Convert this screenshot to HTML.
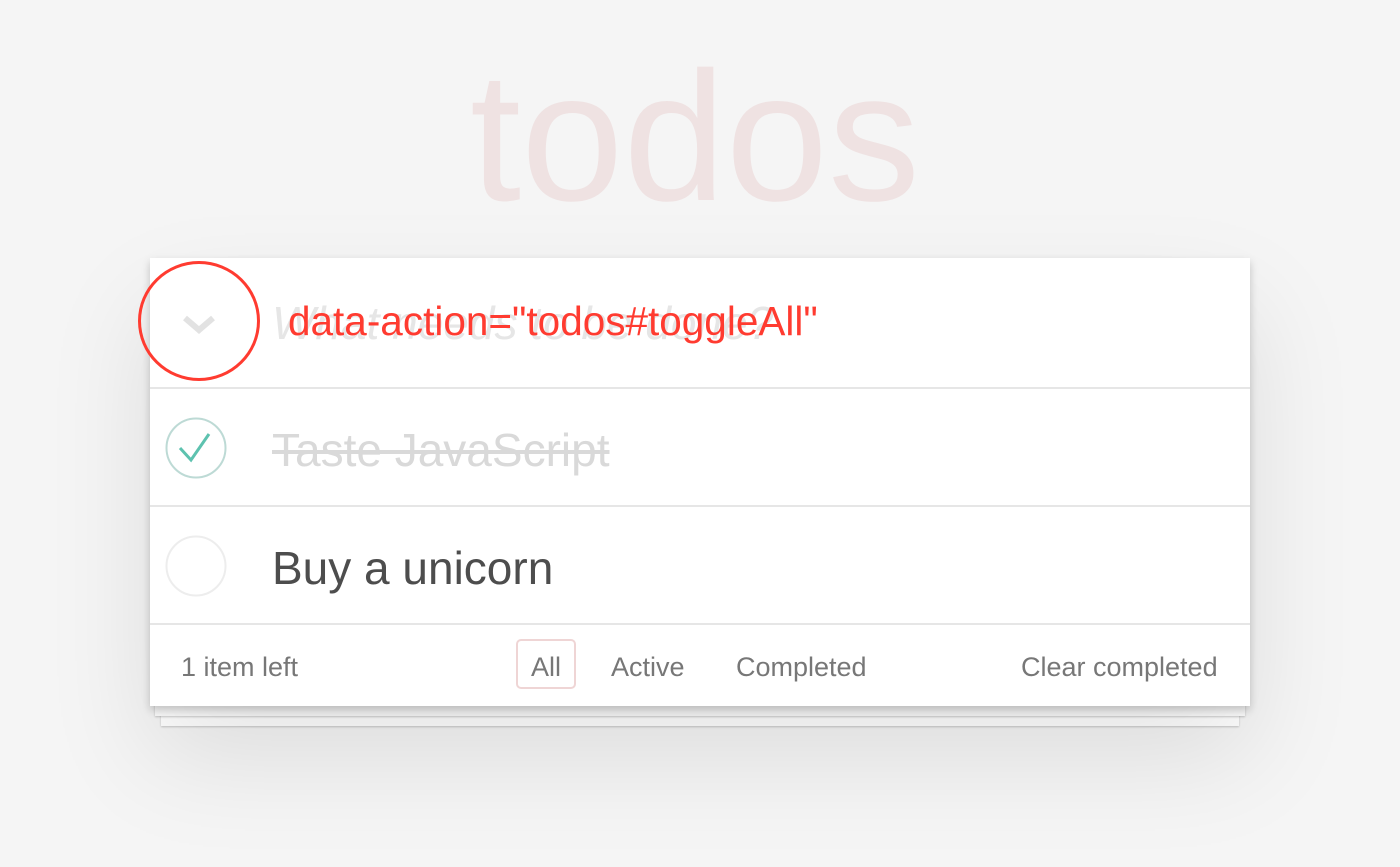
<!DOCTYPE html>
<html><head><meta charset="utf-8"><style>
*{margin:0;padding:0;box-sizing:border-box}
body{width:1400px;height:867px;background:#f5f5f5;font-family:"Liberation Sans",sans-serif;position:relative;overflow:hidden}
h1{position:absolute;left:0;width:1390px;top:44px;text-align:center;font-size:184px;font-weight:normal;color:#efe2e2;letter-spacing:0;line-height:1}
.sheet{position:absolute;background:#fff;box-shadow:0 1px 2px rgba(0,0,0,.2)}
.app{position:absolute;left:150px;top:258px;width:1100px;height:448px;background:#fff;box-shadow:0 4px 8px rgba(0,0,0,.2),0 50px 100px rgba(0,0,0,.1)}
.row{position:absolute;left:0;width:1100px;border-top:2px solid #e6e6e6}
.t{position:absolute;left:122px;font-size:46px;white-space:nowrap}
.f{position:absolute;top:27px;font-size:27px;color:#777;white-space:nowrap}
</style></head><body>
<h1>todos</h1>
<div class="sheet" style="left:161px;top:700px;width:1078px;height:26px"></div>
<div class="sheet" style="left:155px;top:700px;width:1090px;height:16px"></div>
<div class="app">
  <div class="t" style="top:38px;left:122px;color:#e6e6e6;font-style:italic;font-weight:300">What needs to be done?</div>
  <svg style="position:absolute;left:30px;top:50px" width="40" height="30"><path d="M5 10 L19 22 L33 10" stroke="#e2e2e2" stroke-width="6" fill="none"/></svg>
  <div style="position:absolute;left:138px;top:40px;font-size:40.5px;color:#ff3b30;white-space:nowrap">data-action="todos#toggleAll"</div>
  <div style="position:absolute;left:-12px;top:3px;width:122px;height:120px;border:3px solid #ff3b30;border-radius:50%"></div>
  <div class="row" style="top:129px;height:119px">
    <svg style="position:absolute;left:14px;top:28px" width="64" height="64"><circle cx="32" cy="31" r="29.5" fill="none" stroke="#bddad5" stroke-width="2"/><path d="M16 31 L27 43 L45 17" stroke="#5dc2af" stroke-width="3" fill="none"/></svg>
    <div class="t" style="top:34px;color:#d9d9d9;text-decoration:line-through">Taste JavaScript</div>
  </div>
  <div class="row" style="top:247px;height:119px">
    <svg style="position:absolute;left:14px;top:28px" width="64" height="64"><circle cx="32" cy="31" r="29.5" fill="none" stroke="#ededed" stroke-width="2"/></svg>
    <div class="t" style="top:34px;color:#4d4d4d">Buy a unicorn</div>
  </div>
  <div class="row" style="top:365px;height:83px">
    <div class="f" style="left:31px">1 item left</div>
    <div style="position:absolute;left:366px;top:14px;width:60px;height:50px;border:2px solid rgba(175,47,47,.2);border-radius:5px"></div>
    <div class="f" style="left:381px">All</div>
    <div class="f" style="left:461px">Active</div>
    <div class="f" style="left:586px">Completed</div>
    <div class="f" style="left:871px">Clear completed</div>
  </div>
</div>
</body></html>
